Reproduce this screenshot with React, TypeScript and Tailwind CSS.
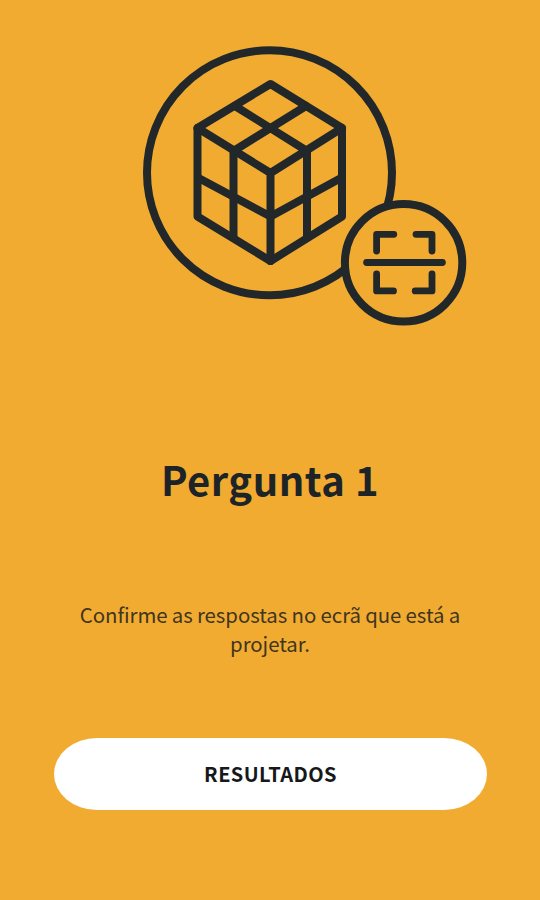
function CubeScanIcon() {
  return (
    <svg className="block h-[330px] w-full" viewBox="0 0 540 330" fill="none" stroke="#22282a" strokeWidth="8" strokeLinecap="round" strokeLinejoin="round" aria-hidden="true">
      <circle cx="269.5" cy="172.800" r="122.500" />
      <path d="M270.500 84 342 128V216.500L270.500 261 197.500 216.500V128Z" />
      <path d="M197.500 128 270.500 173 342 128M270.500 173V261" />
      <path d="M235 106 307 151V236M306 106 233.500 151V236" />
      <path d="M198.500 178 270.500 216.500 341 178" />
      <circle cx="403.600" cy="262.800" r="58.700" fill="#f2ab31" />
      <path strokeWidth="6.800" d="M376.600 251V234.300H393.800M416 234.300H432V251M376.600 273.800V290.900H393.500M415.200 290.900H432V273.800" />
      <path strokeWidth="6.800" d="M366.600 262.500H442.400" />
    </svg>
  );
}

export default function App() {
  return (
    <main className="flex h-[900px] w-[540px] flex-col bg-[#f2ab31] font-['Noto_Sans_CJK_SC','Open_Sans',sans-serif] text-[#1d2427]">
      <CubeScanIcon />
      <h1 className="mt-[119px] text-center text-[40px] font-bold leading-[60px] tracking-[0.5px]">Pergunta 1</h1>
      <p className="mx-[70px] mt-[91px] text-center text-[20.4px] leading-[29px] tracking-[-0.06px] [word-spacing:-0.2px] text-[#40351f]">Confirme as respostas no ecrã que está a projetar.</p>
      <button className="ml-[54px] mt-[80px] h-[72px] w-[433px] rounded-[43px/36px] bg-white text-[20px] font-bold tracking-[0.4px] text-[#16191b]">RESULTADOS</button>
    </main>
  );
}
